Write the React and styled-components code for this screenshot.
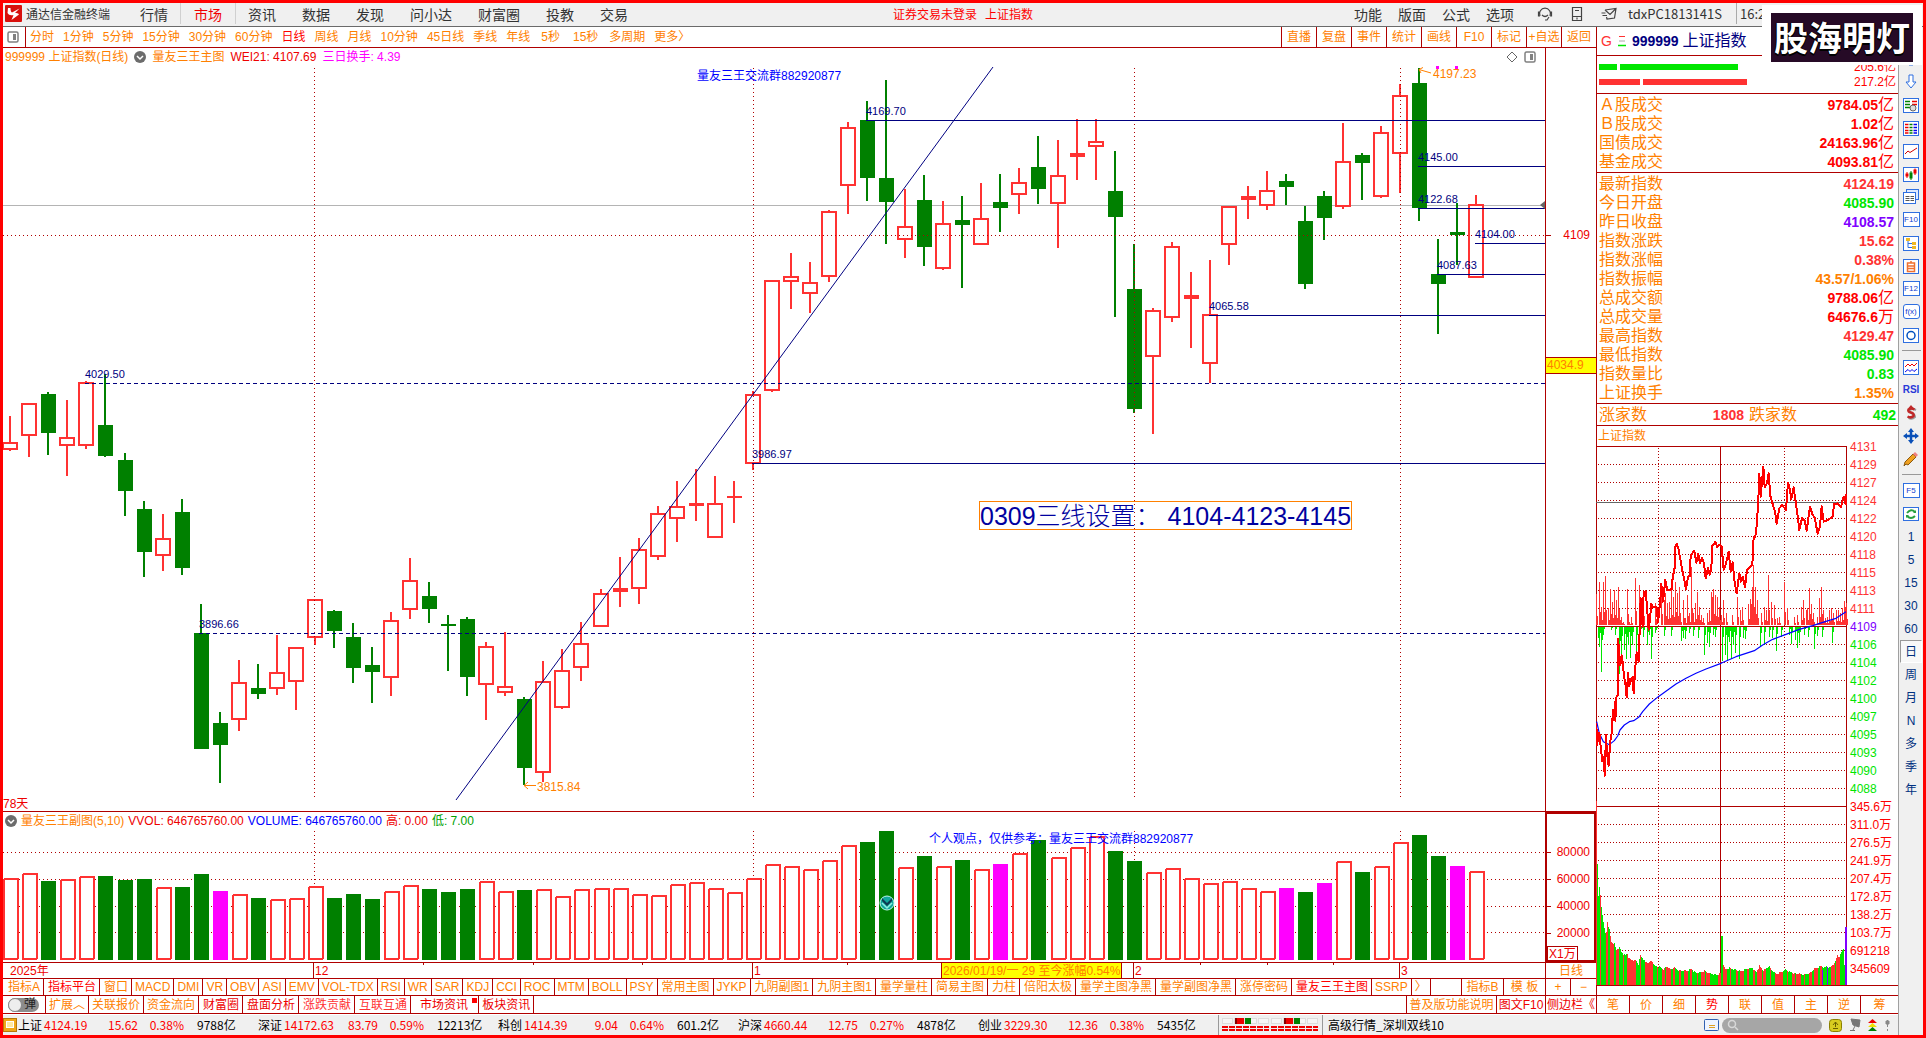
import React from "react";
import styled, { createGlobalStyle, css } from "styled-components";

const C = {
  frame: "#ff0000",
  line: "#b00000",
  orange: "#ff8000",
  red: "#ff3232",
  deep: "#ee0000",
  green: "#008000",
  lime: "#00e600",
  navy: "#000080",
  blue: "#0000ff",
  magenta: "#ff00ff",
  violet: "#8000ff",
  grey: "#f0f0f0",
};

const Global = createGlobalStyle`
  *, *::before, *::after { box-sizing: border-box; }
  body { margin: 0; background: #fff; }
  body, button, input, table {
    font-family: "Liberation Sans", "Noto Sans CJK SC", sans-serif;
    font-size: 12px;
    line-height: 14px;
  }
  button { border: 0; padding: 0; margin: 0; background: none; color: inherit; cursor: pointer; white-space: nowrap; }
  svg { display: block; }
`;

/* ---------- window frame ---------- */

const Window = styled.div`
  position: relative;
  display: flex;
  flex-direction: column;
  height: 100vh;
  min-height: 700px;
  border: 3px solid ${C.frame};
  background: #fff;
  overflow: hidden;
`;
const Body = styled.div`
  flex: 1;
  min-height: 0;
  display: flex;
`;
const Work = styled.main`
  flex: 1;
  min-width: 0;
  display: flex;
  flex-direction: column;
`;
const Upper = styled.div`
  flex: 1;
  min-height: 0;
  display: flex;
`;
const Left = styled.section`
  flex: 1;
  min-width: 0;
  display: flex;
  flex-direction: column;
`;

/* ---------- title bar ---------- */

const TitleBar = styled.header`
  height: 24px;
  display: grid;
  grid-template-columns: 1fr auto 1fr;
  background: ${C.grey};
  border-bottom: 1px solid #6a6a6a;
  padding-bottom: 2px;
  color: #333;
  font-family: "Noto Sans CJK SC", sans-serif;
`;
const TitleLeft = styled.div`
  display: flex;
  align-items: center;
  padding-left: 2px;
`;
const AppName = styled.span`
  margin: 0 17px 0 4px;
  white-space: nowrap;
`;
const Menu = styled.nav`
  display: flex;
  align-self: stretch;
`;
const MenuItem = styled.button`
  padding: 0 13px;
  font-family: inherit;
  font-size: 14px;
  color: ${(p) => (p.$on ? "#f00000" : "#333")};
  box-shadow: ${(p) => (p.$on ? "-1px 0 #d0d0d0, 1px 0 #d0d0d0" : "none")};
`;
const TitleMid = styled.div`
  display: flex;
  align-items: center;
  gap: 8px;
  color: #ff0000;
  white-space: nowrap;
`;
const TitleRight = styled.div`
  display: flex;
  align-items: center;
  justify-content: flex-end;
`;
const PlainMenu = styled.div`
  display: flex;
  gap: 16px;
  margin-right: 23px;
  button { font-family: inherit; font-size: 14px; color: #333; }
`;
const TitleIcons = styled.div`
  display: flex;
  gap: 16px;
  margin-right: 11px;
`;
const User = styled.span`
  width: 108px;
  font-size: 13px;
`;
const Clock = styled.time`
  align-self: stretch;
  width: 187px;
  padding-left: 3px;
  border-left: 1px solid #aaa;
  font-size: 13px;
  line-height: 21px;
`;
const Brand = styled.div`
  position: absolute;
  top: 2px;
  right: 1px;
  z-index: 2;
  padding: 8px 9px 3px;
  background: #fff;
`;
const BrandText = styled.div`
  height: 49px;
  padding: 0 3px;
  background: #260a26;
  color: #fff;
  font: 700 34px/47px "Noto Sans CJK SC", sans-serif;
  text-shadow: 1px 0 #000, -1px 0 #000, 0 2px #000;
  white-space: nowrap;
`;

/* ---------- period tool bar ---------- */

const PeriodBar = styled.div`
  flex: none;
  height: 21px;
  display: flex;
  border-bottom: 1px solid ${C.line};
  color: ${C.orange};
`;
const LayoutToggle = styled.button`
  width: 23px;
  padding-left: 4px;
  border-right: 1px solid ${C.line};
`;
const Periods = styled.div`
  flex: 1;
  display: flex;
  gap: 9px;
  padding-left: 4px;
`;
const Period = styled.button`
  padding: 0 ${(p) => (p.$wide ? 2 : 0)}px;
  color: ${(p) => (p.$on ? "#ff0000" : C.orange)};
`;
const Tool = styled.button`
  width: 35px;
  border-left: 1px solid ${C.line};
  color: ${C.orange};
`;

/* ---------- charts ---------- */

const Pane = styled.div`
  display: flex;
  border-bottom: 1px solid ${C.line};
  ${(p) => (p.$h ? css`flex: none; height: ${p.$h}px;` : css`flex: 1; min-height: 0;`)}
`;
const Plot = styled.div`
  flex: 1;
  min-width: 0;
  display: flex;
  flex-direction: column;
`;
const Scale = styled.div`
  position: relative;
  flex: none;
  width: 51px;
  border-left: 1px solid ${C.line};
  color: ${C.deep};
`;
const FramedScale = styled(Scale)`
  outline: 2px solid ${C.line};
  outline-offset: -2px;
`;
const Info = styled.div`
  flex: none;
  display: flex;
  align-items: center;
  gap: ${(p) => p.$gap}px;
  height: ${(p) => p.$h}px;
  padding: 0 9px 0 2px;
  color: ${C.orange};
  white-space: nowrap;
`;
const Value = styled.span`
  color: ${(p) => p.$c};
`;
const Push = styled.span`
  flex: 1;
`;
const Field = styled.div`
  position: relative;
  flex: 1;
  min-height: 0;
  svg { width: 100%; height: 100%; }
`;
const Mark = styled.span`
  position: absolute;
  margin-top: -7px;
  white-space: nowrap;
  font-size: ${(p) => p.$s || 12}px;
  color: ${(p) => p.$c};
`;
const Note = styled.div`
  position: absolute;
  height: 29px;
  border: 1px solid ${C.orange};
  font-size: 25px;
  line-height: 29px;
  font-weight: 300;
  color: #0000a0;
  white-space: nowrap;
`;
const ScaleMark = styled.span`
  position: absolute;
  right: 6px;
  margin-top: -7px;
  &::before {
    content: "";
    position: absolute;
    right: 39px;
    top: 7px;
    width: 5px;
    height: 1px;
    background: ${C.line};
  }
`;
const PriceFlag = styled.span`
  position: absolute;
  left: 0;
  right: 0;
  height: 17px;
  padding-left: 1px;
  border: solid ${C.line};
  border-width: 1px 0;
  background: #ffff00;
  color: ${C.orange};
  line-height: 15px;
`;
const Unit = styled.span`
  position: absolute;
  left: 1px;
  bottom: 1px;
  height: 15px;
  padding: 0 1px;
  border: 1px solid ${C.line};
`;
const DateFlag = styled.button`
  position: absolute;
  height: 15px;
  padding: 0 1px;
  border: solid ${C.line};
  border-width: 0 1px;
  background: #ffff00;
  color: ${C.orange};
`;

/* ---------- bottom tabs ---------- */

const TabRow = styled.div`
  flex: none;
  display: flex;
  height: ${(p) => p.$h}px;
  border-bottom: 1px solid ${C.line};
  overflow: hidden;
`;
const Tab = styled.button`
  flex: none;
  padding: 0 3px 0 ${(p) => (p.$wide ? 4 : 3)}px;
  border-right: 1px solid ${C.line};
  color: ${(p) => p.$c || C.orange};
  ${(p) => p.$first && css`padding-left: 5px;`}
`;
const NewsTab = styled(Tab)`
  position: relative;
  padding: 0 10px 0 9px;
  &::after {
    content: "";
    position: absolute;
    top: 2px;
    right: 1px;
    width: 5px;
    height: 5px;
    background: #ff0000;
  }
`;
const Cell = styled.button`
  flex: none;
  width: ${(p) => p.$w}px;
  border-left: 1px solid ${C.line};
  color: ${(p) => p.$c || C.orange};
`;
const Switch = styled.label`
  display: flex;
  align-items: center;
  width: 43px;
  padding-left: 5px;
  border-right: 1px solid ${C.line};
  input {
    appearance: none;
    position: relative;
    width: 14px;
    height: 14px;
    margin: 0 -14px 0 0;
    border-radius: 7px;
    background: #eee;
    border: 1px solid #888;
  }
  span {
    width: 31px;
    height: 14px;
    padding-left: 16px;
    border-radius: 7px;
    background: #8c8c8c;
    color: #222;
    line-height: 13px;
  }
`;

/* ---------- status bar ---------- */

const Status = styled.footer`
  flex: none;
  height: 21px;
  display: flex;
  align-items: center;
  background: ${C.grey};
  border-top: 1px solid #fff;
  font-family: "Noto Sans CJK SC", sans-serif;
  color: #000;
  overflow: hidden;
`;
const Quote = styled.div`
  flex: none;
  width: 240px;
  display: grid;
  grid-template-columns: 26px 52px 42px 46px 1fr;
  color: #ff0000;
  white-space: nowrap;
  span:first-child, span:last-child { color: #000; }
  span:nth-child(3), span:nth-child(4) { text-align: right; }
  span:last-child { padding-left: 13px; }
`;
const Signals = styled.div`
  flex: none;
  height: 20px;
  padding: 3px 3px 0;
  border: solid #999;
  border-width: 0 1px;
`;
const ServerName = styled.span`
  padding-left: 5px;
  white-space: nowrap;
`;
const StatusIcons = styled.div`
  display: flex;
  align-items: center;
  gap: 7px;
  margin-left: auto;
  padding-right: 7px;
`;
const Search = styled.label`
  display: flex;
  align-items: center;
  width: 100px;
  height: 15px;
  margin-left: -4px;
  padding-left: 5px;
  border-radius: 8px;
  background: #a6a6a6;
  input { width: 70px; height: 13px; border: 0; padding: 0; background: transparent; outline: 0; }
`;

/* ---------- quote panel ---------- */

const Side = styled.aside`
  flex: none;
  width: 302px;
  display: flex;
  flex-direction: column;
  border-left: 1px solid ${C.line};
`;
const SideHead = styled.div`
  height: 29px;
  display: flex;
  align-items: center;
  gap: 6px;
  padding-left: 4px;
  border-bottom: 1px solid ${C.line};
  color: ${C.navy};
  font-size: 16px;
  b { font-size: 14px; }
  strong { font-weight: 400; margin-left: -2px; }
  i { font-style: normal; font-size: 14px; color: ${C.red}; }
`;
const Flow = styled.div`
  height: 38px;
  padding-top: 4px;
  border-bottom: 1px solid ${C.line};
`;
const FlowRow = styled.div`
  height: 14px;
  margin-bottom: 1px;
  display: flex;
  align-items: center;
  gap: 3px;
  padding: 0 2px;
  color: #ff0000;
  span { margin-left: auto; }
`;
const FlowBar = styled.div`
  height: 6px;
  background: ${(p) => p.$c};
`;
const Rows = styled.table`
  border-collapse: separate;
  border-spacing: 0;
  width: 100%;
  padding: 1px 4px 1px 2px;
  border-bottom: 1px solid ${C.line};
  th, td { height: 19px; padding: 0; font-size: 16px; line-height: 16px; }
  th { text-align: left; font-weight: 400; color: ${C.orange}; }
  td { text-align: right; }
  b { font-size: 14px; }
`;
const Breadth = styled.div`
  display: flex;
  align-items: center;
  height: 22px;
  padding: 0 2px;
  border-bottom: 1px solid ${C.line};
  font-size: 16px;
  color: ${C.orange};
  b { width: 102px; text-align: right; font-size: 14px; padding-right: 5px; color: ${C.red}; }
  b:last-child { flex: 1; padding: 0; color: ${C.lime}; }
`;
const MiniTitle = styled.div`
  height: 20px;
  padding-left: 1px;
  line-height: 20px;
  color: ${C.orange};
`;
const MiniWrap = styled.div`
  flex: 1;
  min-height: 0;
  display: flex;
  padding-bottom: 9px;
  border-bottom: 1px solid ${C.line};
`;
const MiniField = styled.div`
  flex: 1;
  min-width: 0;
  margin-left: -1px;
  svg { width: 100%; height: 100%; }
`;
const MiniScale = styled.ol`
  display: flex;
  flex-direction: column;
  justify-content: space-between;
  width: 50px;
  margin: -8px 0 0;
  padding: 0 0 8px 2px;
  border-bottom: 1px solid ${C.line};
  list-style: none;
  li { height: 18px; line-height: 18px; }
`;
const SideTabs = styled.div`
  display: flex;
  height: 18px;
  border-bottom: 1px solid ${C.line};
  button { width: 33px; border-right: 1px solid ${C.line}; color: ${C.orange}; }
  button:last-child { flex: 1; border: 0; }
  button:nth-child(4) { color: #ff0000; }
`;

/* ---------- vertical tool strip ---------- */

const Strip = styled.nav`
  flex: none;
  width: 25px;
  display: flex;
  flex-direction: column;
  align-items: center;
  padding-top: 20px;
  background: ${C.grey};
  border-left: 1px solid #a0a0a0;
`;
const StripButton = styled.button`
  flex: none;
  width: 22px;
  height: 23px;
  display: flex;
  align-items: center;
  justify-content: center;
  color: #003080;
  ${(p) => p.$on && css`
    background: #f8f8f8;
    border: 1px solid #fff;
    border-top-color: #999;
    border-left-color: #999;
  `}
`;
const StripBox = styled.span`
  width: 17px;
  height: 15px;
  border: 1px solid #2f6fe0;
  border-radius: ${(p) => (p.$soft ? 3 : 0)}px;
  background: #fff;
  color: #1040d0;
  font-size: 8px;
  line-height: 13px;
`;
const StripText = styled.b`
  color: #2838d8;
  font-size: 10px;
`;
const StripRule = styled.hr`
  flex: none;
  width: 19px;
  height: 1px;
  margin: 4px 0;
  border: 0;
  background: #999;
`;

/* ---------- data ---------- */

// kind, body top, body bottom, high, low
const CANDLES = [
  ["r",442,450,416,451],["r",403,436,403,457],["g",394,433,392,455],["r",437,446,400,476],["r",382,446,381,449],
  ["g",425,456,374,457],["g",460,491,453,516],["g",509,552,501,577],["r",538,556,514,571],["g",512,568,499,575],
  ["g",633,749,604,749],["g",723,745,712,783],["r",682,720,660,731],["g",688,694,664,699],["r",672,689,635,695],
  ["r",647,682,647,710],["r",599,638,599,645],["g",611,631,610,648],["g",637,668,623,683],["g",665,672,647,703],
  ["r",620,678,612,696],["r",580,610,558,619],["g",596,609,582,623],["g",624,626,615,671],["g",619,677,617,696],
  ["r",646,685,642,720],["r",686,693,632,696],["g",699,768,697,785],["r",681,773,661,782],["r",670,708,649,709],
  ["r",643,668,622,681],["r",593,627,589,627],["r",588,592,557,607],["r",549,589,538,604],["r",513,557,506,560],
  ["r",506,519,481,542],["r",503,506,469,521],["r",503,538,476,538],["r",496,498,481,523],["r",394,464,391,470],
  ["r",280,391,280,392],["r",276,282,253,309],["r",282,294,262,313],["r",211,277,210,282],["r",127,186,122,214],
  ["g",120,178,101,201],["g",178,202,80,244],["r",226,240,189,258],["g",200,247,175,266],["r",223,269,201,270],
  ["g",220,225,196,288],["r",218,245,183,245],["g",202,208,174,232],["r",182,195,168,214],["g",167,189,136,204],
  ["r",175,204,140,248],["r",153,157,119,180],["r",141,147,119,180],["g",191,217,151,317],["g",289,409,244,413],
  ["r",310,357,308,434],["r",246,318,242,322],["r",295,299,272,348],["r",314,364,260,383],["r",206,245,206,265],
  ["r",196,200,186,219],["r",190,206,171,210],["g",181,187,174,205],["g",221,284,206,289],["g",196,218,191,240],
  ["r",161,207,123,209],["g",155,163,153,200],["r",132,197,126,198],["r",95,154,84,193],["g",83,208,68,221],
  ["g",274,284,239,334],["g",232,235,203,265],["r",204,278,195,278],
];

const VOLUMES = [
  "r878","r873","g881","r879","r876","g876","g880","g879","r887","g887","g874","m891","r894","g898","r899","r898","r886",
  "g898","g894","g899","r891","r885","g889","g892","g889","r881","r891","g890","r889","r896","r889","r888","r888","r894",
  "r895","r884","r882","r888","r892","r878","r864","r866","r869","r860","r845","g842","g831","r867","g856","r866","g860",
  "r869","m864","r853","g840","r857","r847","r836","g851","g861","r872","r868","r878","r883","r881","r888","r891","m888",
  "g892","m883","r861","g872","r866","r842","g835","g856","m866","r871",
];

const slot = (i) => Math.round(10.3 + 19.04 * i);
const MONTH_X = [314, 753, 1134, 1400];

const LEVELS = [
  [866, 120], [1418, 166], [1418, 208], [1475, 243], [1437, 274], [1209, 315], [752, 463],
];
const LEVEL_TEXT = [
  [85,374,"4029.50"],[199,624,"3896.66"],[752,454,"3986.97"],[866,111,"4169.70"],[1418,157,"4145.00"],
  [1418,199,"4122.68"],[1475,234,"4104.00"],[1437,265,"4087.63"],[1209,306,"4065.58"],
];

const MAIN = { x: 3, y: 66, w: 1542, h: 745 };
const VOL = { x: 3, y: 829, w: 1542, h: 133 };
const DATE = { x: 3, y: 963, w: 1542, h: 15 };
const box = (f) => `${f.x} ${f.y} ${f.w} ${f.h}`;
const at = (f, x, y) => ({
  left: `${((x - f.x) / f.w) * 100}%`,
  top: `${((y - f.y) / f.h) * 100}%`,
});

function Candle({ i, d }) {
  const [kind, top, bottom, high, low] = d;
  const x = slot(i);
  const color = kind === "r" ? C.red : C.green;
  const hollow = kind === "r" && bottom - top > 4;
  return (
    <g fill={color}>
      {top > high && <rect x={x - 1} y={high} width="2" height={top - high} />}
      {low > bottom && <rect x={x - 1} y={bottom} width="2" height={low - bottom} />}
      {hollow ? (
        <rect x={x - 7} y={top + 1} width="14" height={bottom - top - 2} fill="none" stroke={color} strokeWidth="2" />
      ) : (
        <rect x={x - 7} y={top} width="15" height={bottom - top} />
      )}
    </g>
  );
}

function MainChart() {
  return (
    <Field>
      <svg viewBox={box(MAIN)} preserveAspectRatio="none" shapeRendering="crispEdges" aria-label="日线K线图">
        <path d="M3 205.5H1545" stroke="#b4b4b4" />
        {CANDLES.map((d, i) => <Candle key={i} i={i} d={d} />)}
        <g stroke={C.line} strokeDasharray="1 3">
          <path d="M3 235.5H1545" />
          {MONTH_X.map((x) => <path key={x} d={`M${x}.5 68V797`} />)}
        </g>
        <g stroke={C.navy} fill="none">
          <path d="M85 383.5H1545M199 633.5H1545" strokeDasharray="4 3" />
          {LEVELS.map(([x, y]) => <path key={`${x}-${y}`} d={`M${x} ${y}.5H1545`} />)}
          <path d="M456 800L993 67" shapeRendering="auto" />
        </g>
        <g stroke={C.orange} fill="none">
          <path d="M524 785.5H536M528 782L524 785.5L528 789M1431 73L1419 69.500M1423 67.500L1419 69.500L1421 73" shapeRendering="auto" />
        </g>
        <path d="M1436 66h3v3h-3zM1455 66h3v3h-3z" fill={C.magenta} />
        <path d="M1545 201V209L1540 205z" fill="#666" shapeRendering="auto" />
      </svg>
      {LEVEL_TEXT.map(([x, y, t]) => <Mark key={t} $s={11} $c={C.navy} style={at(MAIN, x, y)}>{t}</Mark>)}
      <Mark $c={C.orange} style={at(MAIN, 537, 787)}>3815.84</Mark>
      <Mark $c={C.orange} style={at(MAIN, 1433, 74)}>4197.23</Mark>
      <Mark $c={C.blue} style={at(MAIN, 697, 76)}>量友三王交流群882920877</Mark>
      <Mark $c={C.deep} style={at(MAIN, 3, 804)}>78天</Mark>
      <Note style={at(MAIN, 979, 501)}>0309三线设置：&nbsp;4104-4123-4145</Note>
    </Field>
  );
}

function VolumeChart() {
  const paint = { r: C.red, g: C.green, m: C.magenta };
  return (
    <Field>
      <svg viewBox={box(VOL)} preserveAspectRatio="none" shapeRendering="crispEdges" aria-label="成交量">
        <g stroke={C.line} strokeDasharray="1 3">
          {[852, 879, 906, 932].map((y) => <path key={y} d={`M3 ${y}.5H1545`} />)}
          {MONTH_X.map((x) => <path key={x} d={`M${x}.5 831V960`} />)}
        </g>
        {VOLUMES.map((v, i) => {
          const x = slot(i);
          const top = Number(v.slice(1));
          return v[0] === "r" ? (
            <rect key={i} x={x - 6} y={top + 1} width="14" height={958 - top} rx="1" fill="#fff" stroke={C.red} strokeWidth="2" />
          ) : (
            <rect key={i} x={x - 7} y={top} width="15" height={960 - top} fill={paint[v[0]]} />
          );
        })}
        <g shapeRendering="auto">
          <ellipse cx="887" cy="903" rx="7" ry="7" fill="#12a89c" stroke="#bff5ee" />
          <path d="M882 898L887 903L892 898V901L887 906L882 901Z" fill="#0d3a52" />
          <path d="M882 903L887 908L892 903" stroke="#8ff0e0" strokeWidth="1.500" fill="none" />
        </g>
      </svg>
      <Mark $c={C.blue} style={at(VOL, 929, 839)}>个人观点，仅供参考：量友三王交流群882920877</Mark>
    </Field>
  );
}

function DateAxis() {
  return (
    <Field>
      <svg viewBox={box(DATE)} preserveAspectRatio="none" shapeRendering="crispEdges">
        <path d="M313.5 963V978M752.5 963V978M1133.5 963V978M1399.5 963V978" stroke={C.line} />
        <path d="M423.5 963v2M533.5 963v2M642.5 963v2M847.5 963v2M1200.5 963v2M1267.5 963v2M1333.5 963v2" stroke={C.line} />
      </svg>
      {[[10, "2025年"], [315, "12"], [754, "1"], [1135, "2"], [1401, "3"]].map(([x, t]) => (
        <Mark key={t} $c={C.deep} style={at(DATE, x, 971)}>{t}</Mark>
      ))}
      <DateFlag style={at(DATE, 941, 963)}>2026/01/19/一 29 至今涨幅0.54%</DateFlag>
    </Field>
  );
}

/* Intraday chart: three units per pixel so that single minutes stay addressable. */
const PRICE =
  "51,968 53,1035 60,998 64,1040 69,1084 74,1070 76,1128 80,1005 83,1060 88,1098 92,1030 97,1000 101,930 104,960 107,905 108,962 111,892 115,885 116,716 120,762 123,795 128,766 134,830 138,850 142,892 146,820 150,858 156,835 160,830 163,880 168,800 172,756 178,785 181,690 184,595 190,680 193,575 199,574 203,620 208,690 212,655 216,612 222,622 232,622 236,668 243,600 246,552 251,605 258,540 264,570 277,568 281,522 285,520 288,440 292,432 297,445 303,478 309,512 315,540 320,568 326,530 331,528 334,468 340,458 345,452 351,488 357,462 362,490 368,475 374,490 379,535 386,505 391,525 396,505 399,438 408,425 414,442 420,434 427,440 433,510 440,490 448,455 454,515 460,487 466,548 472,580 480,520 485,545 490,530 497,562 503,510 512,500 519,495 523,412 528,410 532,378 537,300 540,222 544,290 552,200 556,262 563,250 568,220 573,288 580,312 587,335 592,372 600,325 608,315 620,330 626,248 631,265 636,298 643,262 648,300 654,340 660,390 668,355 676,362 682,392 692,320 700,345 706,352 715,402 722,380 727,318 733,365 745,360 760,350 764,312 775,310 785,322 793,290 797,308 801,285 801,315";
const AVERAGE =
  "52,965 60,1000 72,1025 90,1034 105,1022 115,1008 122,990 135,975 150,965 163,962 178,952 190,935 210,912 237,890 265,870 290,852 320,835 350,820 380,807 425,790 470,770 500,760 525,752 550,735 580,718 620,703 660,688 700,677 740,664 770,655 800,635";
const UPS = [
  52,582,59,545,67,622,73,545,79,528,86,625,92,568,98,605,104,570,110,600,116,560,121,628,127,650,131,665,145,566,151,665,157,650,168,535,180,555,192,585,204,630,228,610,245,560,254,600,259,580,263,610,271,605,275,570,281,590,287,545,293,580,299,560,304,640,311,600,317,655,323,585,329,640,335,500,341,640,349,610,355,576,361,620,366,645,372,655,385,640,390,630,397,575,400,590,403,568,409,585,415,590,421,620,427,645,433,600,442,640,460,645,475,590,484,630,490,620,506,612,512,598,515,612,518,560,523,495,529,560,535,600,545,640,556,620,562,630,568,525,575,605,586,615,595,655,601,650,616,545,625,625,646,650,655,645,667,620,673,600,680,630,685,625,691,565,697,612,703,640,715,650,721,595,727,560,733,630,739,655,745,650,751,630,757,625,763,640,770,630,778,630,784,640,790,625,795,602,798,620,800,610,
];
const DOWNS = [
  56,715,61,740,67,815,73,705,97,690,109,705,121,822,127,775,134,750,140,778,146,735,154,775,160,735,171,760,183,700,192,710,205,735,211,705,217,778,227,700,232,690,256,708,276,708,307,722,312,715,318,718,331,700,343,708,358,715,376,765,385,728,391,740,403,705,409,712,430,782,437,765,443,780,449,725,455,778,463,735,469,760,481,776,493,715,499,718,544,738,556,735,569,712,580,715,592,752,605,710,631,705,636,732,649,720,655,745,661,730,676,705,688,712,706,748,715,708,730,710,760,728,
];
const TURNOVER = [
  [52,1263],[55,1452],[58,1500],[61,1443],[64,1503],[70,1550],[76,1590],[80,1603],[84,1563],[90,1588],[96,1625],[105,1628],[110,1648],[120,1640],
  [127,1655],[137,1665],[144,1658],[148,1675],[170,1680],[177,1690],[183,1665],[190,1672],[198,1685],[210,1685],[217,1680],[225,1695],[242,1700],
  [252,1705],[262,1698],[273,1705],[285,1700],[300,1710],[320,1710],[335,1705],[350,1718],[375,1710],[390,1718],[410,1722],[423,1718],[427,1608],
  [431,1688],[436,1705],[450,1702],[470,1708],[485,1713],[500,1705],[520,1702],[530,1715],[540,1696],[552,1710],[568,1696],[580,1712],[592,1720],
  [618,1707],[635,1715],[645,1718],[665,1720],[675,1722],[690,1718],[708,1702],[718,1700],[726,1695],[735,1702],[742,1696],[750,1702],[758,1693],
  [766,1688],[774,1662],[780,1670],[787,1650],[792,1642],[798,1750],
];
const pairs = (a) => Array.from({ length: a.length / 2 }, (_, i) => [a[2 * i], a[2 * i + 1]]);
const minuteBars = () => {
  const out = [];
  let k = 0;
  for (let x = 51; x <= 796; x += 3) {
    while (k < TURNOVER.length - 2 && TURNOVER[k + 1][0] <= x) k += 1;
    const [x0, y0] = TURNOVER[k];
    const [x1, y1] = TURNOVER[k + 1];
    const y = y0 + ((y1 - y0) * (x - x0)) / (x1 - x0) + ((x * 7) % 5);
    out.push([x, y, Math.sin(x * 0.37) + Math.sin(x * 0.113) > 0]);
  }
  return out;
};

function Intraday() {
  const rows = [];
  for (let i = 1; i < 29; i += 1) if (i !== 10 && i !== 20) rows.push(139 + i * 54);
  return (
    <MiniField>
      <svg viewBox="50 138 756 1620" preserveAspectRatio="none" shapeRendering="crispEdges" aria-label="上证指数分时走势">
        <g stroke={C.line} strokeWidth="3" fill="none">
          <g strokeDasharray="3 6">
            {rows.map((y) => <path key={y} d={`M56 ${y + 0.5}H803`} />)}
            <path d="M237.500 144V1755M615.500 144V1755" />
          </g>
          <path d="M51 139.500H802.500V1757M51 679.500H803M51 1219.500H803M423.500 139V1757M51 1756.500H806" />
        </g>
        <path d="M51 307.500H803" stroke="#666" strokeWidth="3" />
        <g fill={C.red}>{pairs(UPS).map(([x, y]) => <rect key={x} x={x - 1} y={y} width="3" height={675 - y} />)}
          {pairs(UPS).map(([x, y]) => <rect key={x} x={x + 2} y={y + (675 - y) * 0.7} width="3" height={(675 - y) * 0.3} />)}</g>
        <g fill={C.lime}>{pairs(DOWNS).map(([x, y]) => <rect key={x} x={x - 1} y="681" width="3" height={y - 681} />)}
          {pairs(DOWNS).map(([x, y]) => <rect key={x} x={x + 2} y="681" width="3" height={(y - 681) * 0.3} />)}</g>
        {minuteBars().map(([x, y, up]) => (
          <rect key={x} x={x} y={y} width="3" height={1756 - y} fill={up ? C.lime : C.red} />
        ))}
        <path d="M426 1608h5v148h-5z" fill={C.lime} />
        <path d="M798 1582h6v174h-6zM729 1710h3v46h-3zM744 1700h3v56h-3z" fill={C.violet} />
        <g fill="none" strokeLinejoin="round">
          <polyline points={AVERAGE} stroke={C.blue} strokeWidth="3.500" shapeRendering="auto" />
          <polyline points={PRICE} stroke="#ff0000" strokeWidth="6" />
        </g>
      </svg>
    </MiniField>
  );
}

const UP_TICKS = ["4131","4129","4127","4124","4122","4120","4118","4115","4113","4111"];
const DOWN_TICKS = ["4106","4104","4102","4100","4097","4095","4093","4090","4088"];
const VOL_TICKS = ["345.6万","311.0万","276.5万","241.9万","207.4万","172.8万","138.2万","103.7万","691218","345609"];

/* ---------- small drawings ---------- */

const LayoutIcon = () => (
  <svg width="12" height="12" viewBox="0 0 12 12">
    <rect x="1" y="1" width="10" height="10" rx="1.500" fill="#fff" stroke="#808080" strokeWidth="1.500" />
    <rect x="6" y="3" width="3" height="6" fill="#808080" />
  </svg>
);
const Chevron = () => (
  <svg width="12" height="12" viewBox="0 0 12 12">
    <circle cx="6" cy="6" r="6" fill="#6c6c6c" />
    <path d="M3 5L6 8L9 5" stroke="#fff" strokeWidth="1.500" fill="none" />
  </svg>
);
const Logo = () => (
  <svg width="17" height="17" viewBox="0 0 17 17">
    <rect width="17" height="17" rx="1" fill="#d8100c" />
    <path d="M3 3L2.500 8Q4 11 8.500 10L6.500 15L14 9.500Q13.500 7.500 10 8L14.500 3.500L7 7.500Q5.500 7 5.500 3Z" fill="#fff" />
  </svg>
);
const line = { fill: "none", stroke: "#444", strokeWidth: 1.2 };
const Headset = () => (
  <svg width="16" height="16" viewBox="0 0 16 16" {...line}>
    <path d="M3 10A5.500 5.500 0 1 1 13 10M3 6H1.500V10H3M13 6H14.500V10H13M5 9Q8 12 11 9M12 11L10 14H8" />
  </svg>
);
const Phone = () => (
  <svg width="16" height="16" viewBox="0 0 16 16" {...line}>
    <path d="M3.500 1.500H12.500V14.500H3.500ZM3.500 10.500H12.500M8 11.500V13.500M6 4.500H10" />
  </svg>
);
const Mail = () => (
  <svg width="16" height="16" viewBox="0 0 16 16" {...line}>
    <path d="M4 4L15 2.500L13.500 12L6 13L5.500 11M4 4L9 8.500L15 2.500M0.500 7H4.500M1.500 9.500H6" />
  </svg>
);
const ListMark = () => (
  <svg width="8" height="12" viewBox="0 0 8 12">
    <path d="M1 1.500H7" stroke={C.red} /><path d="M1 6H7" stroke="#aaa" /><path d="M0 10.500H8" stroke={C.lime} strokeWidth="1.500" />
  </svg>
);

const ART = {
  up: <path d="M8 2L13 8H10V14H6V8H3Z" fill="#fff" stroke="#2f6fe0" />,
  down: <path d="M8 14L13 8H10V1H6V8H3Z" fill="#fff" stroke="#2f6fe0" />,
  report: (<><rect x=".5" y="1.500" width="15" height="14" fill="#fff" stroke="#2f6fe0" /><path d="M2 4.500H7M2 7.500H7M2 10.500H7" stroke="#008000" strokeWidth="1.500" /><path d="M9 4.500H14M9 7.500H14" stroke="#e00" strokeWidth="1.500" /><circle cx="10" cy="11" r="3" fill="#ddd" stroke="#666" /></>),
  grid: (<><rect x=".5" y="1.500" width="15" height="14" fill="#fff" stroke="#2f6fe0" /><path d="M2 4.500H5.500M2 7.500H5.500M2 10.500H5.500M2 13H5.500" stroke="#e00" strokeWidth="1.500" /><path d="M6.500 4.500H9.500M6.500 7.500H9.500M6.500 10.500H9.500M6.500 13H9.500" stroke="#008000" strokeWidth="1.500" /><path d="M10.500 4.500H14M10.500 7.500H14M10.500 10.500H14M10.500 13H14" stroke="#00e" strokeWidth="1.500" /></>),
  trend: (<><rect x=".5" y="1.500" width="15" height="14" fill="#fff" stroke="#2f6fe0" /><path d="M2 11L5 8L7 9.500L14 5" fill="none" stroke="#d00000" /></>),
  kline: (<><rect x=".5" y="1.500" width="15" height="14" fill="#fff" stroke="#2f6fe0" /><path d="M4 6V12M12 2.500V9" stroke="#e00" /><path d="M8 5V14" stroke="#008000" /><path d="M2.500 7.500h3v3h-3zM10.500 3.500h3v4h-3z" fill="#e00" /><path d="M6.500 6.500h3v6h-3z" fill="#008000" /></>),
  pages: (<><rect x="3.500" y=".5" width="12" height="10" fill="#dfeaff" stroke="#2f6fe0" /><rect x=".5" y="3.500" width="12" height="11" fill="#fff" stroke="#2f6fe0" /><path d="M2.500 7.500H11M2.500 9.500H11M2.500 11.500H11" stroke="#555" strokeDasharray="4 1" /></>),
  tree: (<><rect x=".5" y="1.500" width="15" height="14" fill="#fff" stroke="#2f6fe0" /><path d="M5 6V12.500H9M5 8.500H9" stroke="#2f6fe0" fill="none" /><path d="M3 3h4v3H3zM9 7h4v3H9zM9 11h4v3H9z" fill="#f0b820" /></>),
  self: (<><rect x=".5" y="1.500" width="15" height="14" fill="#fff" stroke="#2f6fe0" /><path d="M4.500 5H11.500V13.500H4.500ZM4.500 8H11.500M4.500 10.500H11.500M8 3V5" fill="none" stroke="#f07030" strokeWidth="1.500" /></>),
  ring: (<><rect x=".5" y="1.500" width="15" height="14" fill="#fff" stroke="#2f6fe0" /><circle cx="8" cy="8.500" r="4" fill="none" stroke="#0050c0" strokeWidth="1.500" /></>),
  wave: (<><rect x=".5" y="1.500" width="15" height="14" fill="#fff" stroke="#2f6fe0" /><path d="M2 8L5 5L7 7L9 5L11 7L14 4" fill="none" stroke="#e00" /><path d="M2 13L5 10.500L7 12.500L9 10.500L11 12.500L14 10" fill="none" stroke="#00e" /></>),
  dollar: (<><path d="M13 5Q9 3 7 5Q6 7.500 9 8.500Q12 9.500 12 12Q9 15 5.500 13" fill="none" stroke="#999" strokeWidth="2" /><path d="M11.500 4.500Q8 2.500 5.500 4.500Q4.500 7 8 7.500Q11.500 8.500 10.500 11Q8 13.500 4.500 11.500" fill="none" stroke="#c02828" strokeWidth="2.500" /><path d="M8 0L10.500 3H5.500Z" fill="#c02828" /></>),
  move: (<><path d="M8 0L11 4H5ZM8 16L5 12H11ZM0 8L4 5V11ZM16 8L12 11V5Z" fill="#0a50b8" /><path d="M8 3V13M3 8H13" stroke="#0a50b8" strokeWidth="2.500" /></>),
  pencil: (<><path d="M3 13L1 15L2 11L10 3L13 6L5 14Z" fill="#f0a020" stroke="#8a5a10" /><path d="M10 3L12 1L15 4L13 6Z" fill="#f08080" /></>),
  refresh: (<><rect x=".5" y="1.500" width="15" height="13" fill="#fff" stroke="#2f6fe0" /><path d="M4 7Q8 2 12 6M12 10Q8 14 4 10" fill="none" stroke="#28a040" strokeWidth="2" /><path d="M10 7H13V4ZM6 9H3V12Z" fill="#28a040" /></>),
};
const Art = ({ name }) => <svg width="16" height="16" viewBox="0 0 16 16">{ART[name]}</svg>;

const STRIP_TOP = ["up","down","report","grid","trend","kline","pages","F10","tree","self","F12","f(x)","ring"];
const STRIP_MID = ["wave","RSI","dollar","move","pencil"];
const STRIP_END = ["F5","refresh","1","5","15","30","60","日","周","月","N","多","季","年"];

function StripItem({ id }) {
  let inner = id;
  if (ART[id]) inner = <Art name={id} />;
  else if (/^F/.test(id) || id === "f(x)") inner = <StripBox $soft={id === "f(x)"}>{id}</StripBox>;
  else if (id === "RSI") inner = <StripText>RSI</StripText>;
  return <StripButton aria-label={id} $on={id === "日"}>{inner}</StripButton>;
}

function SignalArt() {
  const group = (x) => (
    <g key={x}>
      {[0, 12, 24, 36].map((d) => <rect key={d} x={x + d + 0.5} y=".5" width="10" height="5" fill="#f6f6f6" stroke="#ddd" />)}
      <rect x={x + 13} width="9" height="6" fill="#ee0000" /><rect x={x + 13} width="2" height="6" fill="#800" />
      <rect x={x + 23} width="6" height="6" fill="#008000" />
      <path d={`M${x} 9H${x + 47}M${x} 12H${x + 47}`} stroke="#ee0000" strokeWidth="2" strokeDasharray="6 1" />
    </g>
  );
  return <svg width="97" height="15" viewBox="0 0 97 15" shapeRendering="crispEdges">{[0, 49].map(group)}</svg>;
}

/* ---------- labels ---------- */

const MENU = ["行情","市场","资讯","数据","发现","问小达","财富圈","投教","交易"];
const PERIODS = ["分时","1分钟","5分钟","15分钟","30分钟","60分钟","日线","周线","月线","10分钟","45日线","季线","年线","5秒","15秒","多周期","更多〉"];
const TOOLS = ["直播","复盘","事件","统计","画线","F10","标记","+自选","返回"];
const TABS = ["指标A","指标平台","窗口","MACD","DMI","VR","OBV","ASI","EMV","VOL-TDX","RSI","WR","SAR","KDJ","CCI","ROC","MTM","BOLL","PSY","常用主图","JYKP","九阴副图1","九阴主图1","量学量柱","简易主图","力柱","倍阳太极","量学主图净黑","量学副图净黑","涨停密码","量友三王主图","SSRP","〉"];
const HOT = ["指标平台", "量友三王主图"];
const isWide = (t) => /^[\u4e00-\u9fff]/.test(t);
const LINKS = [["扩展︿",C.orange],["关联报价",C.orange],["资金流向",C.orange],["财富圈",C.deep],["盘面分析",C.deep],["涨跌贡献",C.red],["互联互通",C.red]];
const INDEXES = [
  ["上证","4124.19","15.62","0.38%","9788亿"],
  ["深证","14172.63","83.79","0.59%","12213亿"],
  ["科创","1414.39","9.04","0.64%","601.2亿"],
  ["沪深","4660.44","12.75","0.27%","4878亿"],
  ["创业","3229.30","12.36","0.38%","5435亿"],
];
const TRADED = [
  ["Ａ股成交","9784.05","#ff0000","亿"],["Ｂ股成交","1.02","#ff0000","亿"],
  ["国债成交","24163.96","#ff0000","亿"],["基金成交","4093.81","#ff0000","亿"],
];
const DETAIL = [
  ["最新指数","4124.19",C.red],["今日开盘","4085.90",C.lime],["昨日收盘","4108.57",C.violet],["指数涨跌","15.62",C.red],
  ["指数涨幅","0.38%",C.red],["指数振幅","43.57/1.06%",C.orange],["总成交额","9788.06","#ff0000","亿"],["总成交量","64676.6","#ff0000","万"],
  ["最高指数","4129.47",C.red],["最低指数","4085.90",C.lime],["指数量比","0.83",C.lime],["上证换手","1.35%",C.orange],
];

const QuoteTable = ({ rows }) => (
  <Rows>
    <tbody>
      {rows.map(([name, value, color, unit]) => (
        <tr key={name}><th scope="row">{name}</th><td style={{ color }}><b>{value}</b>{unit}</td></tr>
      ))}
    </tbody>
  </Rows>
);

export default function App() {
  return (
    <Window>
      <Global />
      <TitleBar>
        <TitleLeft>
          <Logo />
          <AppName>通达信金融终端</AppName>
          <Menu>{MENU.map((m) => <MenuItem key={m} $on={m === "市场"}>{m}</MenuItem>)}</Menu>
        </TitleLeft>
        <TitleMid><span>证券交易未登录</span><span>上证指数</span></TitleMid>
        <TitleRight>
          <PlainMenu>{["功能", "版面", "公式", "选项"].map((m) => <button key={m}>{m}</button>)}</PlainMenu>
          <TitleIcons><Headset /><Phone /><Mail /></TitleIcons>
          <User>tdxPC1813141S</User>
          <Clock>16:29</Clock>
        </TitleRight>
      </TitleBar>
      <Brand><BrandText>股海明灯</BrandText></Brand>

      <Body>
        <Work>
          <Upper>
            <Left>
              <PeriodBar>
                <LayoutToggle aria-label="布局"><LayoutIcon /></LayoutToggle>
                <Periods>
                  {PERIODS.map((p) => <Period key={p} $on={p === "日线"} $wide={p.endsWith("秒")}>{p}</Period>)}
                </Periods>
                {TOOLS.map((t) => <Tool key={t}>{t}</Tool>)}
              </PeriodBar>

              <Pane>
                <Plot>
                  <Info $h={18} $gap={6}>
                    <span>999999 上证指数(日线)</span>
                    <Chevron />
                    <span>量友三王主图</span>
                    <Value $c={C.deep}>WEI21: 4107.69</Value>
                    <Value $c={C.magenta}>三日换手: 4.39</Value>
                    <Push />
                    <svg width="12" height="12" viewBox="0 0 12 12"><path d="M6 1L11 6L6 11L1 6Z" fill="#fff" stroke="#666" /></svg>
                    <LayoutIcon />
                  </Info>
                  <MainChart />
                </Plot>
                <Scale>
                  <ScaleMark style={{ top: `${(187 / 763) * 100}%` }}>4109</ScaleMark>
                  <PriceFlag style={{ top: `${(309 / 763) * 100}%` }}>4034.9</PriceFlag>
                </Scale>
              </Pane>

              <Pane $h={151}>
                <Plot>
                  <Info $h={17} $gap={4}>
                    <Chevron />
                    <span>量友三王副图(5,10)</span>
                    <Value $c={C.deep}>VVOL: 646765760.00</Value>
                    <Value $c={C.blue}>VOLUME: 646765760.00</Value>
                    <Value $c={C.deep}>高: 0.00</Value>
                    <Value $c="#00a000">低: 7.00</Value>
                  </Info>
                  <VolumeChart />
                </Plot>
                <FramedScale>
                  {["80000", "60000", "40000", "20000"].map((t, i) => (
                    <ScaleMark key={t} style={{ top: 40 + i * 27 }}>{t}</ScaleMark>
                  ))}
                  <Unit>X1万</Unit>
                </FramedScale>
              </Pane>

              <TabRow $h={16}>
                <DateAxis />
                <Cell $w={51}>日线</Cell>
              </TabRow>
              <TabRow $h={17}>
                {TABS.map((t, i) => (
                  <Tab key={t} $first={i === 0} $wide={isWide(t)} $c={HOT.includes(t) ? "#ff0000" : C.orange}>{t}</Tab>
                ))}
                <Push />
                <Cell $w={42}>指标B</Cell>
                <Cell $w={42}>模 板</Cell>
                <Cell $w={25}>+</Cell>
                <Cell $w={26}>−</Cell>
              </TabRow>
              <TabRow $h={18}>
                <Switch><input type="checkbox" aria-label="弹" /><span>弹</span></Switch>
                {LINKS.map(([t, c]) => <Tab key={t} $c={c} $wide={c !== C.orange}>{t}</Tab>)}
                <NewsTab $c={C.deep}>市场资讯</NewsTab>
                <Tab $c={C.deep}>板块资讯</Tab>
                <Push />
                <Cell $w={90}>普及版功能说明</Cell>
                <Cell $w={49} $c={C.deep}>图文F10</Cell>
                <Cell $w={51} $c={C.deep}>侧边栏《</Cell>
              </TabRow>
            </Left>

            <Side>
              <SideHead><i>G</i><ListMark /><b>999999</b><strong>上证指数</strong></SideHead>
              <Flow>
                <FlowRow>
                  <FlowBar $c={C.lime} style={{ width: 18 }} /><FlowBar $c={C.lime} style={{ width: 118 }} /><span>205.6亿</span>
                </FlowRow>
                <FlowRow>
                  <FlowBar $c={C.red} style={{ width: 41 }} /><FlowBar $c={C.red} style={{ width: 104 }} /><span>217.2亿</span>
                </FlowRow>
              </Flow>
              <QuoteTable rows={TRADED} />
              <QuoteTable rows={DETAIL} />
              <Breadth>涨家数<b>1808</b>跌家数<b>492</b></Breadth>
              <MiniTitle>上证指数</MiniTitle>
              <MiniWrap>
                <Intraday />
                <MiniScale>
                  {UP_TICKS.map((t) => <li key={t} style={{ color: C.red }}>{t}</li>)}
                  <li style={{ color: C.violet }}>4109</li>
                  {DOWN_TICKS.map((t) => <li key={t} style={{ color: C.lime }}>{t}</li>)}
                  {VOL_TICKS.map((t) => <li key={t} style={{ color: "#ff0000" }}>{t}</li>)}
                </MiniScale>
              </MiniWrap>
              <SideTabs>{[..."笔价细势联值主逆筹"].map((t) => <button key={t}>{t}</button>)}</SideTabs>
            </Side>
          </Upper>

          <Status>
            <svg width="15" height="14" viewBox="0 0 15 14"><rect x=".5" y=".5" width="13" height="13" fill="#f0a818" stroke="#b87808" /><rect x="3.500" y="3.500" width="7" height="6" fill="#ffe9a0" stroke="#fff" /></svg>
            {INDEXES.map((q) => <Quote key={q[0]}>{q.map((v) => <span key={v}>{v}</span>)}</Quote>)}
            <Signals><SignalArt /></Signals>
            <ServerName>高级行情_深圳双线10</ServerName>
            <StatusIcons>
              <svg width="15" height="12" viewBox="0 0 15 12"><rect x=".5" y=".5" width="14" height="11" rx="1" fill="#eef4ff" stroke="#3060b0" /><path d="M5 6.500H11M5 8.500H11" stroke="#e0a020" /></svg>
              <Search>
                <svg width="12" height="12" viewBox="0 0 12 12"><circle cx="5" cy="5" r="3.500" fill="none" stroke="#d8d8d8" strokeWidth="1.500" /><path d="M8 8L11 11" stroke="#d8d8d8" strokeWidth="1.500" /></svg>
                <input aria-label="搜索" />
              </Search>
              <svg width="13" height="13" viewBox="0 0 13 13"><rect x=".5" y=".5" width="12" height="12" rx="3" fill="#d8cc20" stroke="#8a8000" /><path d="M6.500 3V8M4 6L6.500 3L9 6M4 9.500H9" stroke="#6a6000" fill="none" /></svg>
              <svg width="12" height="14" viewBox="0 0 12 14"><path d="M2 1L11 2L10 9L4 7ZM6 8L4 12M1 12.500H6" fill="#777" stroke="#777" /></svg>
              <svg width="9" height="13" viewBox="0 0 9 13"><path d="M4.500 0L9 4H0Z" fill="#e00" /><path d="M4.500 4L9 8H0Z" fill="#f0e000" /><path d="M4.500 8L9 12H0Z" fill="#008000" /></svg>
              <svg width="7" height="13" viewBox="0 0 7 13"><path d="M3.500 1V8M3.500 10V12M2 2H5V5H2Z" stroke="#888" fill="#888" /></svg>
            </StatusIcons>
          </Status>
        </Work>

        <Strip>
          {STRIP_TOP.map((id) => <StripItem key={id} id={id} />)}
          <StripRule />
          {STRIP_MID.map((id) => <StripItem key={id} id={id} />)}
          <StripRule />
          {STRIP_END.map((id) => <StripItem key={id} id={id} />)}
        </Strip>
      </Body>
    </Window>
  );
}
